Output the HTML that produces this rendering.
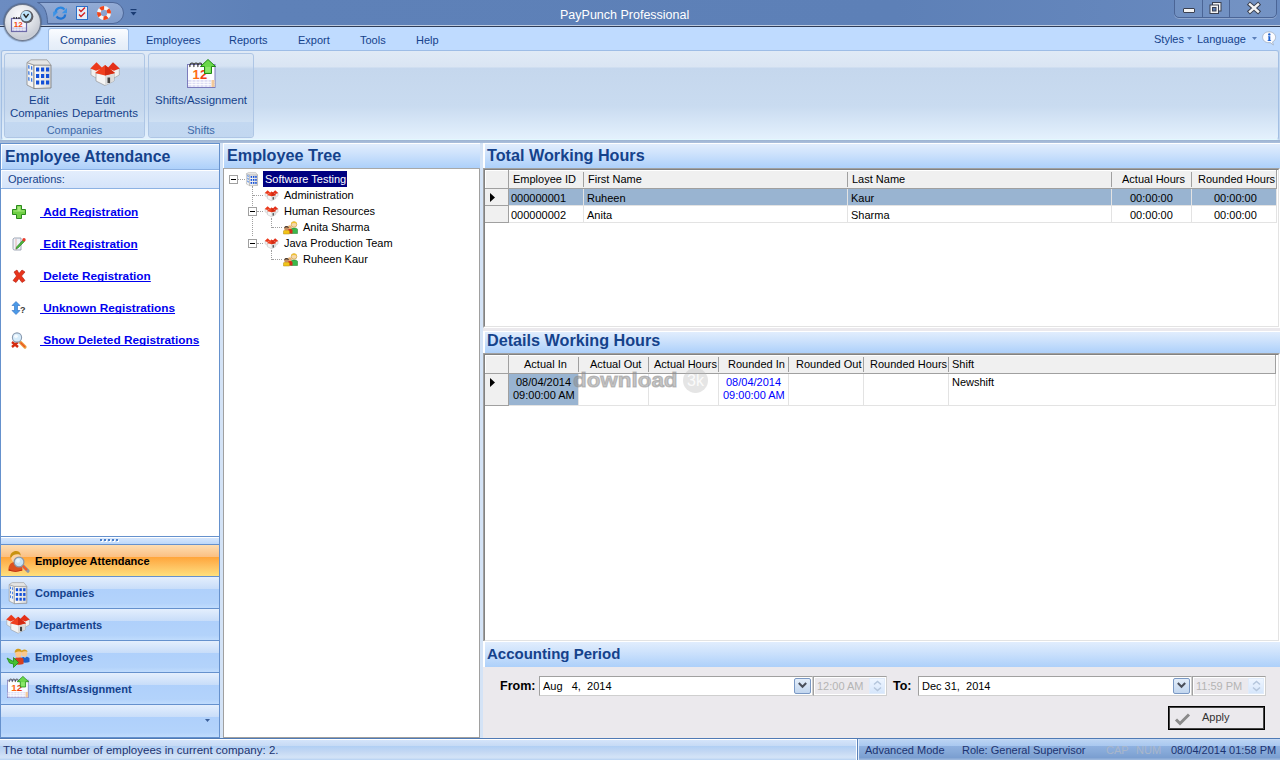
<!DOCTYPE html>
<html><head><meta charset="utf-8">
<style>
*{margin:0;padding:0;box-sizing:border-box}
html,body{width:1280px;height:760px;overflow:hidden;background:#c4d8f0;font-family:"Liberation Sans",sans-serif;font-size:11px;color:#000}
.a{position:absolute}
.t{white-space:nowrap}
svg{position:absolute;overflow:visible}
#title{left:0;top:0;width:1280px;height:25px;background:linear-gradient(90deg,#6c8cc1 0,#5e81b8 20%,#5d80b7 70%,#6a8bc0 100%)}
#tabs{left:0;top:25px;width:1280px;height:25px;background:linear-gradient(#c8e3ff 0,#c8e3ff 1px,#bfdbff 1px);border-top:1px solid #bccadf}
.tab{position:absolute;top:8px;color:#15428b;font-size:11px;line-height:13px}
#ribbon{left:1px;top:50px;width:1278px;height:90px;border:1px solid #a3bfe3;border-top-color:#9ebde6;border-bottom-color:#e2f8fe;border-radius:3px;background:linear-gradient(#e0eaf6 0,#dae5f3 16px,#c5d7ed 17px,#c9dbf0 55px,#e4f1fd 88px)}
.grp{top:2px;height:85px;border:1px solid #aec6e5;border-radius:3px;background:linear-gradient(#dde8f5 0,#d6e3f3 12px,#c3d5ec 15px,#c6d8ee 55px,#cfe0f3 68px)}
.grp .lab{position:absolute;left:0;right:0;bottom:0;height:15px;background:linear-gradient(#c3d8f1,#c2d7f0);color:#3e6aaa;text-align:center;line-height:13px;padding-top:2px;font-size:11px;border-radius:0 0 3px 3px}
.rbt{position:absolute;color:#15428b;text-align:center;line-height:13px;font-size:11.5px}
.hdr{position:absolute;left:0;top:0;height:25px;background:linear-gradient(#fff 0,#fff 1px,#e1edfd 1px,#cfe3fc 40%,#add0fa 100%);color:#15428b;font-weight:bold;font-size:16.2px;line-height:25px;padding-left:4px;white-space:nowrap;box-shadow:inset 1px 0 0 #fff}
#status{left:0;top:738px;width:1280px;height:22px;background:linear-gradient(#ffffff 0,#ffffff 1px,#d4e4fa 1px,#c6daf5 7px,#b0cff4 7px,#c4d8f3 13px,#d3e3f7 18px,#d0e1f6 19px,#b6d1f2 21px);border-top:1px solid #4f7ab5;color:#1c3370;font-size:11.5px;line-height:21px}
.lnk{position:absolute;color:#0000ee;font-weight:bold;text-decoration:underline;text-decoration-skip-ink:none;font-size:11.8px;line-height:14px}
.gh{position:absolute;top:0;height:19px;background:#f0f0f0;line-height:18px;color:#000;font-size:11px}
.gs{position:absolute;width:1px;background:#a0a0a0}
.cell{position:absolute;line-height:16px;font-size:11px;white-space:nowrap}
.nav{position:absolute;left:0;width:218px;height:32px;border-top:1px solid #6591cd;background:linear-gradient(#e4effd 0,#c8ddf9 38%,#afd0fb 39%,#b3d3fb 85%,#c0dcfd 100%);color:#15428b;font-weight:bold;font-size:11px;line-height:30px;padding-left:34px}
.tr{position:absolute;font-size:11px;line-height:14px;white-space:nowrap}
.dot{position:absolute;border-style:dotted;border-color:#a0a0a0;border-width:0}
</style></head><body>
<!-- Title bar -->
<div id="title" class="a">
  <svg style="left:0;top:0" width="140" height="26" viewBox="0 0 140 26">
    <defs><linearGradient id="qg" x1="0" y1="0" x2="0" y2="1"><stop offset="0" stop-color="#93acd6"/><stop offset="0.5" stop-color="#8aa4d0"/><stop offset="1" stop-color="#819dcc"/></linearGradient></defs>
    <path d="M37.5 2.5 H113 A10.5 10.5 0 0 1 113 23.5 H47.5 C47.5 12 44 5 37.5 2.5 Z" fill="url(#qg)" stroke="#4d6798" stroke-width="1"/>
  </svg>
  <!-- refresh icon -->
  <svg style="left:53px;top:6px" width="15" height="14" viewBox="0 0 15 14">
    <path d="M2.5 7 C2.5 2.5 8 -0.5 11.5 3.5" fill="none" stroke="#2a86e0" stroke-width="2.2"/>
    <path d="M14 2 L14 7.2 L8.8 7.2 Z" fill="#3d93e6"/>
    <path d="M12.2 8.5 C12 12.5 6.5 14.5 3.5 10.5" fill="none" stroke="#1f74d4" stroke-width="2.2"/>
    <path d="M0.2 5.8 L5.2 5.8 L0.2 11 Z" fill="#3d93e6"/>
  </svg>
  <!-- checklist icon -->
  <svg style="left:76px;top:6px" width="12" height="14" viewBox="0 0 12 14">
    <rect x="0.5" y="0.5" width="11" height="13" fill="#e8eef6" stroke="#2a6fc9"/>
    <path d="M3 3.5 L5 5.5 L9 1.5 M3 8.5 L5 10.5 L9 6.5" fill="none" stroke="#d42020" stroke-width="1.4"/>
  </svg>
  <!-- lifebuoy -->
  <svg style="left:97px;top:6px" width="14" height="14" viewBox="0 0 14 14">
    <circle cx="7" cy="7" r="5.1" fill="none" stroke="#f6f6f6" stroke-width="3.8"/>
    <circle cx="7" cy="7" r="5.1" fill="none" stroke="#f0441a" stroke-width="3.8" stroke-dasharray="4.005 4.005" transform="rotate(-135 7 7)"/>
  </svg>
  <!-- qat dropdown -->
  <svg style="left:130px;top:9px" width="7" height="7" viewBox="0 0 7 7">
    <rect x="0.5" y="0" width="6" height="1.2" fill="#1a3c74"/>
    <path d="M0.5 3 L6.5 3 L3.5 6.5 Z" fill="#1a3c74"/>
  </svg>
  <!-- title text -->
  <div class="a t" style="left:560px;top:8px;font-size:12.5px;line-height:15px;color:#fff">PayPunch Professional</div>
  <!-- window controls -->
  <div class="a" style="left:1174px;top:-3px;width:103px;height:21px;border:1px solid #4b6596;border-radius:0 0 5px 5px;box-shadow:0 1px 0 rgba(255,255,255,.25);background:rgba(255,255,255,.07)"></div>
  <div class="a" style="left:1202px;top:0;width:1px;height:17px;background:#4b6596"></div>
  <div class="a" style="left:1229px;top:0;width:1px;height:17px;background:#4b6596"></div>
  <div class="a" style="left:1183px;top:8px;width:12px;height:5px;background:#f4f4f4;border:1px solid #3a4050;border-radius:1px"></div>
  <svg style="left:1209px;top:2px" width="13" height="12" viewBox="0 0 13 12">
    <rect x="3.5" y="0.5" width="8.5" height="8.5" fill="#f0f0f0" stroke="#3a4050"/>
    <rect x="1" y="3" width="8.5" height="8.5" fill="#f4f4f4" stroke="#3a4050"/>
    <rect x="3.5" y="5.5" width="3.5" height="3.5" fill="#5b7db5" stroke="#3a4050"/>
  </svg>
  <svg style="left:1247px;top:2px" width="14" height="12" viewBox="0 0 14 12">
    <path d="M3 2.5 L11 9.5 M11 2.5 L3 9.5" stroke="#3a4050" stroke-width="4.4" stroke-linecap="square"/>
    <path d="M3 2.5 L11 9.5 M11 2.5 L3 9.5" stroke="#f4f4f4" stroke-width="2.4" stroke-linecap="square"/>
  </svg>
</div>
<!-- Tab strip -->
<div id="tabs" class="a">
  <div class="a" style="left:0;top:0;width:1280px;height:1px;background:#2e3c58"></div><div class="a" style="left:48px;top:2px;width:81px;height:23px;border:1px solid #9bbbe6;border-bottom:none;border-radius:3px 3px 0 0;background:linear-gradient(#fafcff,#eaf1fa 60%,#e3ecf7)"></div>
  <div class="tab t" style="left:60px">Companies</div>
  <div class="tab t" style="left:146px">Employees</div>
  <div class="tab t" style="left:229px">Reports</div>
  <div class="tab t" style="left:298px">Export</div>
  <div class="tab t" style="left:360px">Tools</div>
  <div class="tab t" style="left:416px">Help</div>
  <div class="tab t" style="left:1154px;top:7px">Styles</div>
  <svg style="left:1187px;top:11px" width="5" height="3" viewBox="0 0 5 3"><path d="M0 0 H5 L2.5 3 Z" fill="#5b7fb9"/></svg>
  <div class="tab t" style="left:1197px;top:7px">Language</div>
  <svg style="left:1252px;top:11px" width="5" height="3" viewBox="0 0 5 3"><path d="M0 0 H5 L2.5 3 Z" fill="#5b7fb9"/></svg>
  <svg style="left:1262px;top:5px" width="15" height="15" viewBox="0 0 15 15">
    <path d="M7 0.8 C10.8 0.8 13.6 3.2 13.6 6.3 C13.6 8.5 12.4 10 10.6 10.9 L11.4 14 L8.2 11.6 C7.8 11.7 7.4 11.7 7 11.7 C3.2 11.7 0.6 9.3 0.6 6.3 C0.6 3.2 3.2 0.8 7 0.8 Z" fill="#fbfcff" stroke="#a6b3c6" stroke-width="0.9"/>
    <circle cx="7.3" cy="3.4" r="1.2" fill="#1a5fd0"/>
    <path d="M6.1 5.2 H8.3 V9.3 H9.1 V10 H5.6 V9.3 H6.4 V6 H6.1 Z" fill="#1a5fd0"/>
  </svg>
</div>

<!-- App button -->
<div class="a" style="left:4px;top:4px;width:37px;height:37px;border-radius:50%;background:#6f7a8e;box-shadow:0 0 1px 1px rgba(60,70,90,.45)"></div>
<div class="a" style="left:5px;top:5px;width:35px;height:35px;border-radius:50%;background:radial-gradient(circle at 42% 28%,#f8f9fb 0,#e4e7ec 38%,#c8ccd5 72%,#d6dae1 88%,#f4f6f8 100%)"></div>
<svg style="left:10px;top:9px" width="26" height="24" viewBox="0 0 26 24">
  <rect x="1.5" y="9.5" width="15" height="13" fill="#f6f6fc" stroke="#6d6aa8" stroke-width="1.2"/>
  <rect x="2.2" y="18.5" width="13.6" height="3.4" fill="#b8b8e0"/>
  <path d="M2.2 20.2 H15.8 M5 18.5 V22 M8 18.5 V22 M11 18.5 V22 M14 18.5 V22" stroke="#ffffff" stroke-width="0.7"/>
  <path d="M4 10 v-2 M6.5 10 v-2 M9 10 v-2 M11.5 10 v-2" stroke="#333" stroke-width="1.2"/>
  <text x="3.8" y="17.8" font-family="Liberation Sans" font-weight="bold" font-size="8" fill="#f24a10">12</text>
  <circle cx="16.8" cy="7.6" r="6.6" fill="#5e5e66"/>
  <circle cx="16.2" cy="7" r="5.2" fill="#bfe4fb"/>
  <path d="M13.6 5 L16 8.4 L18.6 4.8" fill="none" stroke="#222" stroke-width="1.4"/>
</svg>


<div id="ribbon" class="a">
  <div class="a grp" style="left:2px;width:141px">
    <div class="rbt t" style="left:-2px;width:72px;top:40px">Edit<br>Companies</div>
    <div class="rbt t" style="left:64px;width:72px;top:40px">Edit<br>Departments</div>
    <div class="lab">Companies</div>
  </div>
  <div class="a grp" style="left:146px;width:106px">
    <div class="rbt t" style="left:0;width:104px;top:40px">Shifts/Assignment</div>
    <div class="lab">Shifts</div>
  </div>
</div>
<svg style="left:26px;top:59px" width="26" height="30" viewBox="0 0 26 30">
<defs><linearGradient id="bf2659" x1="0" x2="1"><stop offset="0" stop-color="#fdfdfd"/><stop offset="1" stop-color="#d8d8d8"/></linearGradient></defs>
<path d="M1 3.5 L8 6 L8 29.5 L1 26 Z" fill="#f2f2f2" stroke="#8a8a8a" stroke-width="0.8"/>
<path d="M8 6 H25 V29 L8 29.5 Z" fill="url(#bf2659)" stroke="#7a7a7a" stroke-width="0.8"/>
<path d="M1 3.5 L5 0.8 H21 L25 6 H8 Z" fill="#e4e4e4" stroke="#9a9a9a" stroke-width="0.8"/>
<g fill="#1450d8">
<rect x="10" y="8.5" width="3.2" height="4"/><rect x="15" y="8.5" width="3.2" height="4"/><rect x="20" y="8.5" width="3.2" height="4"/>
<rect x="10" y="15" width="3.2" height="4"/><rect x="15" y="15" width="3.2" height="4"/><rect x="20" y="15" width="3.2" height="4"/>
<rect x="10" y="21.5" width="3.2" height="4"/><rect x="15" y="21.5" width="3.2" height="4"/><rect x="20" y="21.5" width="3.2" height="4"/>
</g>
<g fill="#3a78e0">
<path d="M2.2 6 l1.3 .5 v3.5 l-1.3 -.5z M5 7 l1.3 .5 v3.5 l-1.3 -.5z"/>
<path d="M2.2 12 l1.3 .5 v3.5 l-1.3 -.5z M5 13 l1.3 .5 v3.5 l-1.3 -.5z"/>
<path d="M2.2 18 l1.3 .5 v3.5 l-1.3 -.5z M5 19 l1.3 .5 v3.5 l-1.3 -.5z"/>
</g></svg>
<svg style="left:90px;top:62px" width="30" height="24" viewBox="0 0 30 24">
<path d="M1 6.5 V13 L6 16 L11.5 13 V6.5 Z" fill="#f0f0f0" stroke="#999" stroke-width="0.6"/>
<path d="M0.3 6.5 L6.5 0.3 L12.5 6.2 L6 8.8 Z" fill="#ec3a1c"/>
<path d="M18.5 6.5 V13 L24 16 L29.3 13 V6.5 Z" fill="#f0f0f0" stroke="#999" stroke-width="0.6"/>
<path d="M17.5 6.2 L23 0.3 L29.7 6.5 L24 8.8 Z" fill="#e4301a"/>
<path d="M6 11 V19 L15 23.5 L24 19 V11 Z" fill="#f5f5f5" stroke="#8a8a8a" stroke-width="0.6"/>
<path d="M15 13.5 V23.5 L24 19 V11 Z" fill="#dcdcdc"/>
<path d="M5 11 L15 3 L25 11 L15 13.5 Z" fill="#f0401f"/>
<path d="M15 3 L25 11 L15 13.5 Z" fill="#d42a12"/>
<rect x="17.5" y="15.5" width="2.6" height="5.5" fill="#444"/>
</svg>
<svg style="left:187px;top:59px" width="29" height="29" viewBox="0 0 29 29">
<rect x="0.5" y="5.5" width="27.5" height="23" fill="#fdfdff" stroke="#7c7cbc" stroke-width="1"/>
<rect x="1" y="21" width="26.5" height="7" fill="#dcdcf4"/>
<path d="M1 23.3 H27.5 M1 25.6 H27.5 M5 21 V28 M9 21 V28 M13 21 V28 M17 21 V28 M21 21 V28 M24.5 21 V28" stroke="#ffffff" stroke-width="0.9"/>
<rect x="24.5" y="21" width="3" height="7" fill="#f2c89a"/>
<path d="M3 8 C2 4 6 2.5 7 6 M7 8 C6 4 10 2.5 11 6 M11 8 C10 4 14 2.5 15 6" fill="none" stroke="#333" stroke-width="1.1"/>
<text x="5.5" y="20" font-family="Liberation Sans" font-weight="bold" font-size="13" fill="#ff6a12">1</text>
<text x="13" y="20" font-family="Liberation Sans" font-weight="bold" font-size="13" fill="#f03c10">2</text>
<path d="M21 0.5 L28.5 7.5 H24.5 V14.5 H17.5 V7.5 H13.5 Z" fill="#6ad84a" stroke="#1f8a12" stroke-width="1"/>
<path d="M18.5 8 H23.5 V13.5 H18.5 Z" fill="#8ae86a"/>
</svg>
<div class="a" style="left:0;top:140px;width:1280px;height:3px;background:linear-gradient(#9db3d2,#abc0dc)"></div>
<div class="a" style="left:0;top:143px;width:220px;height:595px;background:#fff;border:1px solid #6591cd;border-bottom:none">
  <div class="hdr" style="width:218px;font-size:15.9px">Employee Attendance</div>
  <div class="a" style="left:0;top:25px;width:218px;height:1px;background:#8db2e3"></div>
  <div class="a t" style="left:0;top:26px;width:218px;height:19px;background:linear-gradient(#e4eefc,#d5e4fa);border-bottom:1px solid #8db2e3;padding-left:7px;line-height:18px;color:#15428b;font-size:11px;box-shadow:inset 1px 1px 0 #fff">Operations:</div>
</div>
<div class="lnk t" style="left:40px;top:205px">&nbsp;Add Registration</div>
<div class="lnk t" style="left:40px;top:237px">&nbsp;Edit Registration</div>
<div class="lnk t" style="left:40px;top:269px">&nbsp;Delete Registration</div>
<div class="lnk t" style="left:40px;top:301px">&nbsp;Unknown Registrations</div>
<div class="lnk t" style="left:40px;top:333px">&nbsp;Show Deleted Registrations</div>
<svg style="left:12px;top:205px" width="14" height="14" viewBox="0 0 14 14">
<path d="M4.5 0.5 H9.5 V4.5 H13.5 V9.5 H9.5 V13.5 H4.5 V9.5 H0.5 V4.5 H4.5 Z" fill="#6fcf45" stroke="#2b8a1c" stroke-width="1"/>
<path d="M5.5 1.5 H8.5 V5.5 H12.5 V6.5 H1.5 V5.5 H5.5 Z" fill="#a6e87c"/></svg>
<svg style="left:12px;top:237px" width="14" height="14" viewBox="0 0 14 14">
<path d="M1 2 Q2 0.5 4 1 H9 V13 H2.5 Q1 13 1 11.5 Z" fill="#eef2f8" stroke="#8a94a4" stroke-width="0.8"/>
<path d="M4 2 V13" stroke="#e08a80" stroke-width="0.6"/>
<path d="M4.5 10 L11 3 L12.5 4.5 L6 11 L4 12 Z" fill="#4cb83a" stroke="#2a7a20" stroke-width="0.6"/>
<circle cx="12" cy="2.8" r="1.7" fill="#e83a2a"/></svg>
<svg style="left:12px;top:269px" width="14" height="14" viewBox="0 0 14 14">
<path d="M2 3 L5 1 L7 4.5 L10 1 L13 3 L9.5 7 L13 11.5 L10 13.5 L7 9.5 L4 13.5 L1 11.5 L4.5 7 Z" fill="#e8341c" stroke="#b01a0a" stroke-width="0.6"/></svg>
<svg style="left:11px;top:301px" width="16" height="14" viewBox="0 0 16 14">
<path d="M5 0.5 L9 4.5 H6.5 V9.5 H9 L5 13.5 L1 9.5 H3.5 V4.5 H1 Z" fill="#4a9ae8" stroke="#2a6ac0" stroke-width="0.6"/>
<text x="9" y="11.5" font-family="Liberation Sans" font-weight="bold" font-size="9" fill="#3a3a3a">?</text></svg>
<svg style="left:11px;top:332px" width="16" height="16" viewBox="0 0 16 16">
<path d="M1 10 L7 15 M7 10 L1 15" stroke="#d42a10" stroke-width="2.4"/>
<path d="M9.5 10.5 L14 15" stroke="#e8a040" stroke-width="3.2" stroke-linecap="round"/>
<path d="M9.5 10.5 L14 15" stroke="#f05020" stroke-width="1.2"/>
<circle cx="6" cy="5.5" r="4.6" fill="#d6ecfb" stroke="#8a9ab0" stroke-width="1.1"/>
<circle cx="5" cy="4.3" r="1.8" fill="#ffffff" opacity=".8"/></svg>
<div class="a" style="left:1px;top:536px;width:218px;height:9px;border-top:1px solid #6591cd;border-bottom:1px solid #6591cd;background:linear-gradient(#fff 0,#fff 1px,#d6e6fc 1px,#bcd8fa 100%)"></div>
<div class="a" style="left:101px;top:540px;width:2px;height:2px;background:#fff"></div>
<div class="a" style="left:100px;top:539px;width:2px;height:2px;background:#4a7ec8"></div>
<div class="a" style="left:105px;top:540px;width:2px;height:2px;background:#fff"></div>
<div class="a" style="left:104px;top:539px;width:2px;height:2px;background:#4a7ec8"></div>
<div class="a" style="left:109px;top:540px;width:2px;height:2px;background:#fff"></div>
<div class="a" style="left:108px;top:539px;width:2px;height:2px;background:#4a7ec8"></div>
<div class="a" style="left:113px;top:540px;width:2px;height:2px;background:#fff"></div>
<div class="a" style="left:112px;top:539px;width:2px;height:2px;background:#4a7ec8"></div>
<div class="a" style="left:117px;top:540px;width:2px;height:2px;background:#fff"></div>
<div class="a" style="left:116px;top:539px;width:2px;height:2px;background:#4a7ec8"></div>
<div class="a" style="left:1px;top:545px;width:218px;height:31px;border-top:none;background:linear-gradient(#fdddb2 0,#fbc083 38%,#ffa63c 40%,#fec261 70%,#ffe07c 100%)"></div>
<div class="a t" style="left:35px;top:555px;font-weight:bold;font-size:11px;line-height:13px;color:#000">Employee Attendance</div>
<div class="nav" style="left:1px;top:576px;height:32px"></div>
<div class="a t" style="left:35px;top:587px;font-weight:bold;font-size:11px;line-height:13px;color:#15428b">Companies</div>
<div class="nav" style="left:1px;top:608px;height:32px"></div>
<div class="a t" style="left:35px;top:619px;font-weight:bold;font-size:11px;line-height:13px;color:#15428b">Departments</div>
<div class="nav" style="left:1px;top:640px;height:32px"></div>
<div class="a t" style="left:35px;top:651px;font-weight:bold;font-size:11px;line-height:13px;color:#15428b">Employees</div>
<div class="nav" style="left:1px;top:672px;height:32px"></div>
<div class="a t" style="left:35px;top:683px;font-weight:bold;font-size:11px;line-height:13px;color:#15428b">Shifts/Assignment</div>
<div class="nav" style="left:1px;top:704px;height:33px"></div>
<svg style="left:205px;top:719px" width="5" height="3" viewBox="0 0 5 3"><path d="M0 0 H5 L2.5 3 Z" fill="#3a5f9a"/></svg>
<div class="a" style="left:1px;top:737px;width:218px;height:1px;background:#6591cd"></div>
<svg style="left:4px;top:545px" width="30" height="30" viewBox="0 0 30 30">
<path d="M4.5 25.5 C4 19 8 17 11 17 C15 17 18.5 19 18.5 25.5 C14 27 9 27 4.5 25.5 Z" fill="#dc5220"/>
<path d="M5 24 C8 26.5 14 26.5 18 24.5 V25.5 C14 27 9 27 4.5 25.5 Z" fill="#b82a10"/>
<ellipse cx="11.5" cy="12" rx="4.5" ry="5.8" fill="#fcd2a4"/>
<path d="M6.2 12.5 C5.5 5 16.5 3.5 16.8 10.5 C15 8.5 9 8.5 7.5 12.5 Z" fill="#c89212"/>
<path d="M18.5 20.5 L24 26" stroke="#8a95a8" stroke-width="3.2" stroke-linecap="round"/>
<path d="M18.5 20.5 L23 25" stroke="#ff5a1a" stroke-width="2.2"/>
<circle cx="15" cy="17" r="4.9" fill="#c4e2f6" stroke="#8c96a4" stroke-width="1.2"/>
<circle cx="14" cy="15.8" r="2" fill="#eef8ff" opacity=".8"/>
</svg>
<svg style="left:8px;top:582px" width="20" height="22" viewBox="0 0 26 30">
<defs><linearGradient id="bf8582" x1="0" x2="1"><stop offset="0" stop-color="#fdfdfd"/><stop offset="1" stop-color="#d8d8d8"/></linearGradient></defs>
<path d="M1 3.5 L8 6 L8 29.5 L1 26 Z" fill="#f2f2f2" stroke="#8a8a8a" stroke-width="0.8"/>
<path d="M8 6 H25 V29 L8 29.5 Z" fill="url(#bf8582)" stroke="#7a7a7a" stroke-width="0.8"/>
<path d="M1 3.5 L5 0.8 H21 L25 6 H8 Z" fill="#e4e4e4" stroke="#9a9a9a" stroke-width="0.8"/>
<g fill="#1450d8">
<rect x="10" y="8.5" width="3.2" height="4"/><rect x="15" y="8.5" width="3.2" height="4"/><rect x="20" y="8.5" width="3.2" height="4"/>
<rect x="10" y="15" width="3.2" height="4"/><rect x="15" y="15" width="3.2" height="4"/><rect x="20" y="15" width="3.2" height="4"/>
<rect x="10" y="21.5" width="3.2" height="4"/><rect x="15" y="21.5" width="3.2" height="4"/><rect x="20" y="21.5" width="3.2" height="4"/>
</g>
<g fill="#3a78e0">
<path d="M2.2 6 l1.3 .5 v3.5 l-1.3 -.5z M5 7 l1.3 .5 v3.5 l-1.3 -.5z"/>
<path d="M2.2 12 l1.3 .5 v3.5 l-1.3 -.5z M5 13 l1.3 .5 v3.5 l-1.3 -.5z"/>
<path d="M2.2 18 l1.3 .5 v3.5 l-1.3 -.5z M5 19 l1.3 .5 v3.5 l-1.3 -.5z"/>
</g></svg>
<svg style="left:6px;top:614px" width="24" height="20" viewBox="0 0 30 24">
<path d="M1 6.5 V13 L6 16 L11.5 13 V6.5 Z" fill="#f0f0f0" stroke="#999" stroke-width="0.6"/>
<path d="M0.3 6.5 L6.5 0.3 L12.5 6.2 L6 8.8 Z" fill="#ec3a1c"/>
<path d="M18.5 6.5 V13 L24 16 L29.3 13 V6.5 Z" fill="#f0f0f0" stroke="#999" stroke-width="0.6"/>
<path d="M17.5 6.2 L23 0.3 L29.7 6.5 L24 8.8 Z" fill="#e4301a"/>
<path d="M6 11 V19 L15 23.5 L24 19 V11 Z" fill="#f5f5f5" stroke="#8a8a8a" stroke-width="0.6"/>
<path d="M15 13.5 V23.5 L24 19 V11 Z" fill="#dcdcdc"/>
<path d="M5 11 L15 3 L25 11 L15 13.5 Z" fill="#f0401f"/>
<path d="M15 3 L25 11 L15 13.5 Z" fill="#d42a12"/>
<rect x="17.5" y="15.5" width="2.6" height="5.5" fill="#444"/>
</svg>
<svg style="left:4px;top:640px" width="30" height="30" viewBox="0 0 30 30">
<path d="M17 22 V19 C17 16.5 25 16 25.5 18.5 L25.5 22 C23 23 19.5 23 17 22 Z" fill="#1f5fc8"/>
<path d="M19.5 16.5 L21 18 L22.5 16.5 Z" fill="#bfe8f8"/>
<ellipse cx="20.5" cy="13.5" rx="2.8" ry="3.3" fill="#f8c890"/>
<path d="M17.5 12.5 C17 8.5 23.5 8.5 23.5 12 C22 11 19.5 11 17.5 12.5 Z" fill="#d8a020"/>
<path d="M10.5 24 V19.5 C10.5 16.5 19.5 16.5 19.5 19.5 V24 C16 25 13.5 25 10.5 24 Z" fill="#d8401c"/>
<ellipse cx="14.5" cy="13.8" rx="3.2" ry="3.8" fill="#fbc88e"/>
<path d="M10.8 13 C10 7.5 18.5 7.5 18 12.5 C16.5 11 13 11 10.8 13 Z" fill="#d49a18"/>
<path d="M3 18 L9.5 21.5 V17.5 L14.5 22.5 L9.5 27.5 V24 L5.5 23 Z" fill="#46c032" stroke="#1e8a18" stroke-width="0.8"/>
</svg>
<svg style="left:7px;top:676px" width="22" height="22" viewBox="0 0 29 29">
<rect x="0.5" y="5.5" width="27.5" height="23" fill="#fdfdff" stroke="#7c7cbc" stroke-width="1"/>
<rect x="1" y="21" width="26.5" height="7" fill="#dcdcf4"/>
<path d="M1 23.3 H27.5 M1 25.6 H27.5 M5 21 V28 M9 21 V28 M13 21 V28 M17 21 V28 M21 21 V28 M24.5 21 V28" stroke="#ffffff" stroke-width="0.9"/>
<rect x="24.5" y="21" width="3" height="7" fill="#f2c89a"/>
<path d="M3 8 C2 4 6 2.5 7 6 M7 8 C6 4 10 2.5 11 6 M11 8 C10 4 14 2.5 15 6" fill="none" stroke="#333" stroke-width="1.1"/>
<text x="5.5" y="20" font-family="Liberation Sans" font-weight="bold" font-size="13" fill="#ff6a12">1</text>
<text x="13" y="20" font-family="Liberation Sans" font-weight="bold" font-size="13" fill="#f03c10">2</text>
<path d="M21 0.5 L28.5 7.5 H24.5 V14.5 H17.5 V7.5 H13.5 Z" fill="#6ad84a" stroke="#1f8a12" stroke-width="1"/>
<path d="M18.5 8 H23.5 V13.5 H18.5 Z" fill="#8ae86a"/>
</svg>
<div class="a" style="left:220px;top:143px;width:3px;height:595px;background:#d4e3f6"></div>
<div class="a" style="left:223px;top:143px;width:257px;height:595px;background:#fff">
  <div class="hdr" style="width:257px;border-bottom:1px solid #a8a8a8;height:26px">Employee Tree</div>
  <div class="a" style="left:0;top:26px;width:1px;height:569px;background:#a0a0a0"></div>
  <div class="a" style="left:256px;top:26px;width:1px;height:569px;background:#a0a0a0"></div>
  <div class="a" style="left:0;top:594px;width:257px;height:1px;background:#a0a0a0"></div>
</div>
<div class="a" style="left:480px;top:143px;width:3px;height:595px;background:#d4e3f6"></div>
<div class="dot" style="left:252px;top:186px;height:50px;border-left-width:1px"></div>
<div class="dot" style="left:271px;top:218px;height:10px;border-left-width:1px"></div>
<div class="dot" style="left:271px;top:250px;height:10px;border-left-width:1px"></div>
<div class="dot" style="left:238px;top:179px;width:7px;border-top-width:1px"></div>
<div class="dot" style="left:253px;top:195px;width:10px;border-top-width:1px"></div>
<div class="dot" style="left:257px;top:211px;width:6px;border-top-width:1px"></div>
<div class="dot" style="left:257px;top:243px;width:6px;border-top-width:1px"></div>
<div class="dot" style="left:272px;top:227px;width:10px;border-top-width:1px"></div>
<div class="dot" style="left:272px;top:259px;width:10px;border-top-width:1px"></div>
<div class="a" style="left:229px;top:175px;width:9px;height:9px;border:1px solid #a0a0a0;background:#fff"><div class="a" style="left:1px;top:3px;width:5px;height:1px;background:#000"></div></div>
<div class="a" style="left:248px;top:207px;width:9px;height:9px;border:1px solid #a0a0a0;background:#fff"><div class="a" style="left:1px;top:3px;width:5px;height:1px;background:#000"></div></div>
<div class="a" style="left:248px;top:239px;width:9px;height:9px;border:1px solid #a0a0a0;background:#fff"><div class="a" style="left:1px;top:3px;width:5px;height:1px;background:#000"></div></div>
<svg style="left:246px;top:172px" width="12" height="14" viewBox="0 0 26 30">
<defs><linearGradient id="bf246172" x1="0" x2="1"><stop offset="0" stop-color="#fdfdfd"/><stop offset="1" stop-color="#d8d8d8"/></linearGradient></defs>
<path d="M1 3.5 L8 6 L8 29.5 L1 26 Z" fill="#f2f2f2" stroke="#8a8a8a" stroke-width="0.8"/>
<path d="M8 6 H25 V29 L8 29.5 Z" fill="url(#bf246172)" stroke="#7a7a7a" stroke-width="0.8"/>
<path d="M1 3.5 L5 0.8 H21 L25 6 H8 Z" fill="#e4e4e4" stroke="#9a9a9a" stroke-width="0.8"/>
<g fill="#1450d8">
<rect x="10" y="8.5" width="3.2" height="4"/><rect x="15" y="8.5" width="3.2" height="4"/><rect x="20" y="8.5" width="3.2" height="4"/>
<rect x="10" y="15" width="3.2" height="4"/><rect x="15" y="15" width="3.2" height="4"/><rect x="20" y="15" width="3.2" height="4"/>
<rect x="10" y="21.5" width="3.2" height="4"/><rect x="15" y="21.5" width="3.2" height="4"/><rect x="20" y="21.5" width="3.2" height="4"/>
</g>
<g fill="#3a78e0">
<path d="M2.2 6 l1.3 .5 v3.5 l-1.3 -.5z M5 7 l1.3 .5 v3.5 l-1.3 -.5z"/>
<path d="M2.2 12 l1.3 .5 v3.5 l-1.3 -.5z M5 13 l1.3 .5 v3.5 l-1.3 -.5z"/>
<path d="M2.2 18 l1.3 .5 v3.5 l-1.3 -.5z M5 19 l1.3 .5 v3.5 l-1.3 -.5z"/>
</g></svg>
<div class="a" style="left:263px;top:171px;width:84px;height:16px;background:#000080"></div>
<div class="tr" style="left:265px;top:172px;color:#fff">Software Testing</div>
<svg style="left:264px;top:190px" width="15" height="11" viewBox="0 0 30 24">
<path d="M1 6.5 V13 L6 16 L11.5 13 V6.5 Z" fill="#f0f0f0" stroke="#999" stroke-width="0.6"/>
<path d="M0.3 6.5 L6.5 0.3 L12.5 6.2 L6 8.8 Z" fill="#ec3a1c"/>
<path d="M18.5 6.5 V13 L24 16 L29.3 13 V6.5 Z" fill="#f0f0f0" stroke="#999" stroke-width="0.6"/>
<path d="M17.5 6.2 L23 0.3 L29.7 6.5 L24 8.8 Z" fill="#e4301a"/>
<path d="M6 11 V19 L15 23.5 L24 19 V11 Z" fill="#f5f5f5" stroke="#8a8a8a" stroke-width="0.6"/>
<path d="M15 13.5 V23.5 L24 19 V11 Z" fill="#dcdcdc"/>
<path d="M5 11 L15 3 L25 11 L15 13.5 Z" fill="#f0401f"/>
<path d="M15 3 L25 11 L15 13.5 Z" fill="#d42a12"/>
<rect x="17.5" y="15.5" width="2.6" height="5.5" fill="#444"/>
</svg>
<div class="tr" style="left:284px;top:188px">Administration</div>
<svg style="left:264px;top:206px" width="15" height="11" viewBox="0 0 30 24">
<path d="M1 6.5 V13 L6 16 L11.5 13 V6.5 Z" fill="#f0f0f0" stroke="#999" stroke-width="0.6"/>
<path d="M0.3 6.5 L6.5 0.3 L12.5 6.2 L6 8.8 Z" fill="#ec3a1c"/>
<path d="M18.5 6.5 V13 L24 16 L29.3 13 V6.5 Z" fill="#f0f0f0" stroke="#999" stroke-width="0.6"/>
<path d="M17.5 6.2 L23 0.3 L29.7 6.5 L24 8.8 Z" fill="#e4301a"/>
<path d="M6 11 V19 L15 23.5 L24 19 V11 Z" fill="#f5f5f5" stroke="#8a8a8a" stroke-width="0.6"/>
<path d="M15 13.5 V23.5 L24 19 V11 Z" fill="#dcdcdc"/>
<path d="M5 11 L15 3 L25 11 L15 13.5 Z" fill="#f0401f"/>
<path d="M15 3 L25 11 L15 13.5 Z" fill="#d42a12"/>
<rect x="17.5" y="15.5" width="2.6" height="5.5" fill="#444"/>
</svg>
<div class="tr" style="left:284px;top:204px">Human Resources</div>
<svg style="left:264px;top:238px" width="15" height="11" viewBox="0 0 30 24">
<path d="M1 6.5 V13 L6 16 L11.5 13 V6.5 Z" fill="#f0f0f0" stroke="#999" stroke-width="0.6"/>
<path d="M0.3 6.5 L6.5 0.3 L12.5 6.2 L6 8.8 Z" fill="#ec3a1c"/>
<path d="M18.5 6.5 V13 L24 16 L29.3 13 V6.5 Z" fill="#f0f0f0" stroke="#999" stroke-width="0.6"/>
<path d="M17.5 6.2 L23 0.3 L29.7 6.5 L24 8.8 Z" fill="#e4301a"/>
<path d="M6 11 V19 L15 23.5 L24 19 V11 Z" fill="#f5f5f5" stroke="#8a8a8a" stroke-width="0.6"/>
<path d="M15 13.5 V23.5 L24 19 V11 Z" fill="#dcdcdc"/>
<path d="M5 11 L15 3 L25 11 L15 13.5 Z" fill="#f0401f"/>
<path d="M15 3 L25 11 L15 13.5 Z" fill="#d42a12"/>
<rect x="17.5" y="15.5" width="2.6" height="5.5" fill="#444"/>
</svg>
<div class="tr" style="left:284px;top:236px">Java Production Team</div>
<svg style="left:283px;top:220px" width="15" height="14" viewBox="0 0 15 14">
<path d="M7.5 13.5 V9.5 C7.5 7.5 14.5 7.5 14.5 9.5 V13.5 Z" fill="#3cb84a" stroke="#1e7a2a" stroke-width="0.5"/>
<circle cx="11" cy="4.5" r="2.8" fill="#f6d8a8" stroke="#c09020" stroke-width="0.6"/>
<path d="M8.2 4 C8.2 0.8 13.8 0.8 13.8 4 C12.5 2.8 9.5 2.8 8.2 4 Z" fill="#f0c030"/>
<path d="M4 13.5 V10 C4 8.5 9.5 8.5 9.5 10 V13.5 Z" fill="#d8281a"/>
<circle cx="6.8" cy="7.2" r="2" fill="#e8b070"/>
<path d="M0.5 14 V11 C0.5 9.5 6.5 9.5 6.5 11 V14 Z" fill="#f2c418" stroke="#b08a10" stroke-width="0.5"/>
<circle cx="3.5" cy="8.2" r="2.3" fill="#c89060"/>
<path d="M1.2 8 C1.2 5.5 5.8 5.5 5.8 8 C4.5 7 2.5 7 1.2 8 Z" fill="#222"/>
</svg>
<div class="tr" style="left:303px;top:220px">Anita Sharma</div>
<svg style="left:283px;top:252px" width="15" height="14" viewBox="0 0 15 14">
<path d="M7.5 13.5 V9.5 C7.5 7.5 14.5 7.5 14.5 9.5 V13.5 Z" fill="#3cb84a" stroke="#1e7a2a" stroke-width="0.5"/>
<circle cx="11" cy="4.5" r="2.8" fill="#f6d8a8" stroke="#c09020" stroke-width="0.6"/>
<path d="M8.2 4 C8.2 0.8 13.8 0.8 13.8 4 C12.5 2.8 9.5 2.8 8.2 4 Z" fill="#f0c030"/>
<path d="M4 13.5 V10 C4 8.5 9.5 8.5 9.5 10 V13.5 Z" fill="#d8281a"/>
<circle cx="6.8" cy="7.2" r="2" fill="#e8b070"/>
<path d="M0.5 14 V11 C0.5 9.5 6.5 9.5 6.5 11 V14 Z" fill="#f2c418" stroke="#b08a10" stroke-width="0.5"/>
<circle cx="3.5" cy="8.2" r="2.3" fill="#c89060"/>
<path d="M1.2 8 C1.2 5.5 5.8 5.5 5.8 8 C4.5 7 2.5 7 1.2 8 Z" fill="#222"/>
</svg>
<div class="tr" style="left:303px;top:252px">Ruheen Kaur</div>
<div class="a" style="left:483px;top:143px;width:797px;height:595px;background:#ebe9ed"></div>
<div class="hdr a" style="left:483px;top:143px;width:797px;height:25px;border-left:1px solid #fff;padding-left:3px">Total Working Hours</div>
<div class="a" style="left:483px;top:168px;width:797px;height:160px;border:1px solid;border-color:#a0a0a0 #ffffff #ffffff #a0a0a0"></div><div class="a" style="left:484px;top:169px;width:795px;height:158px;background:#fff;border:1px solid;border-color:#828282 #e3e3e3 #e3e3e3 #828282"></div>
<div class="a" style="left:485px;top:170px;width:792px;height:19px;background:#f0f0f0;border-bottom:1px solid #a0a0a0;border-right:1px solid #a0a0a0;box-shadow:inset 1px 1px 0 #fff"></div>
<div class="gs" style="left:508px;top:170px;height:18px"></div>
<div class="gs" style="left:583px;top:172px;height:15px"></div>
<div class="gs" style="left:847px;top:172px;height:15px"></div>
<div class="gs" style="left:1111px;top:172px;height:15px"></div>
<div class="gs" style="left:1191px;top:172px;height:15px"></div>
<div class="a" style="left:485px;top:189px;width:24px;height:34px;background:#f0f0f0;border-right:1px solid #a0a0a0;border-bottom:1px solid #a0a0a0"></div>
<div class="a" style="left:485px;top:205px;width:23px;height:1px;background:#a0a0a0"></div>
<div class="a" style="left:509px;top:189px;width:768px;height:16px;background:#99b4d1"></div>
<div class="a" style="left:583px;top:189px;width:1px;height:34px;background:#e3e3e3"></div>
<div class="a" style="left:847px;top:189px;width:1px;height:34px;background:#e3e3e3"></div>
<div class="a" style="left:1111px;top:189px;width:1px;height:34px;background:#e3e3e3"></div>
<div class="a" style="left:1191px;top:189px;width:1px;height:34px;background:#e3e3e3"></div>
<div class="a" style="left:1276px;top:189px;width:1px;height:34px;background:#e3e3e3"></div>
<div class="a" style="left:509px;top:205px;width:768px;height:1px;background:#e3e3e3"></div>
<div class="a" style="left:509px;top:222px;width:768px;height:1px;background:#e3e3e3"></div>
<svg style="left:490px;top:193px" width="5" height="9" viewBox="0 0 5 9"><path d="M0 0 L5 4.5 L0 9 Z" fill="#000"/></svg>
<div class="cell" style="left:513px;top:171px">Employee ID</div>
<div class="cell" style="left:588px;top:171px">First Name</div>
<div class="cell" style="left:852px;top:171px">Last Name</div>
<div class="cell" style="left:1122px;top:171px">Actual Hours</div>
<div class="cell" style="left:1198px;top:171px">Rounded Hours</div>
<div class="cell" style="left:511px;top:190px">000000001</div>
<div class="cell" style="left:587px;top:190px">Ruheen</div>
<div class="cell" style="left:851px;top:190px">Kaur</div>
<div class="cell" style="left:1130px;top:190px">00:00:00</div>
<div class="cell" style="left:1214px;top:190px">00:00:00</div>
<div class="cell" style="left:511px;top:207px">000000002</div>
<div class="cell" style="left:587px;top:207px">Anita</div>
<div class="cell" style="left:851px;top:207px">Sharma</div>
<div class="cell" style="left:1130px;top:207px">00:00:00</div>
<div class="cell" style="left:1214px;top:207px">00:00:00</div>
<div class="hdr a" style="left:483px;top:331px;width:797px;height:22px;border-left:1px solid #fff;line-height:22px"><div class="a" style="left:3px;top:-2px">Details Working Hours</div></div>
<div class="a" style="left:483px;top:353px;width:797px;height:289px;border:1px solid;border-color:#a0a0a0 #ffffff #ffffff #a0a0a0"></div><div class="a" style="left:484px;top:354px;width:795px;height:287px;background:#fff;border:1px solid;border-color:#828282 #e3e3e3 #e3e3e3 #828282"></div>
<div class="a" style="left:485px;top:355px;width:791px;height:19px;background:#f0f0f0;border-bottom:1px solid #a0a0a0;border-right:1px solid #a0a0a0;box-shadow:inset 1px 1px 0 #fff"></div>
<div class="gs" style="left:508px;top:354px;height:19px"></div>
<div class="gs" style="left:578px;top:357px;height:15px"></div>
<div class="gs" style="left:648px;top:357px;height:15px"></div>
<div class="gs" style="left:718px;top:357px;height:15px"></div>
<div class="gs" style="left:788px;top:357px;height:15px"></div>
<div class="gs" style="left:863px;top:357px;height:15px"></div>
<div class="gs" style="left:948px;top:357px;height:15px"></div>
<div class="a" style="left:485px;top:374px;width:24px;height:32px;background:#f0f0f0;border-right:1px solid #a0a0a0;border-bottom:1px solid #a0a0a0"></div>
<div class="a" style="left:509px;top:374px;width:70px;height:31px;background:#99b4d1"></div>
<div class="a" style="left:578px;top:374px;width:1px;height:32px;background:#e3e3e3"></div>
<div class="a" style="left:648px;top:374px;width:1px;height:32px;background:#e3e3e3"></div>
<div class="a" style="left:718px;top:374px;width:1px;height:32px;background:#e3e3e3"></div>
<div class="a" style="left:788px;top:374px;width:1px;height:32px;background:#e3e3e3"></div>
<div class="a" style="left:863px;top:374px;width:1px;height:32px;background:#e3e3e3"></div>
<div class="a" style="left:948px;top:374px;width:1px;height:32px;background:#e3e3e3"></div>
<div class="a" style="left:1275px;top:374px;width:1px;height:32px;background:#e3e3e3"></div>
<div class="a" style="left:509px;top:405px;width:767px;height:1px;background:#e3e3e3"></div>
<svg style="left:490px;top:378px" width="5" height="9" viewBox="0 0 5 9"><path d="M0 0 L5 4.5 L0 9 Z" fill="#000"/></svg>
<div class="cell" style="left:524px;top:356px">Actual In</div>
<div class="cell" style="left:590px;top:356px">Actual Out</div>
<div class="cell" style="left:654px;top:356px">Actual Hours</div>
<div class="cell" style="left:728px;top:356px">Rounded In</div>
<div class="cell" style="left:796px;top:356px">Rounded Out</div>
<div class="cell" style="left:870px;top:356px">Rounded Hours</div>
<div class="cell" style="left:952px;top:356px">Shift</div>
<div class="cell" style="left:516px;top:376px;line-height:13px;text-align:center;width:53px">08/04/2014</div>
<div class="cell" style="left:513px;top:389px;line-height:13px">09:00:00 AM</div>
<div class="cell" style="left:726px;top:376px;line-height:13px;color:#0000ff">08/04/2014</div>
<div class="cell" style="left:723px;top:389px;line-height:13px;color:#0000ff">09:00:00 AM</div>
<div class="cell" style="left:952px;top:376px;line-height:13px">Newshift</div>
<div class="a t" style="left:573px;top:368px;font-size:20px;font-weight:bold;color:rgba(140,140,140,.5);letter-spacing:0px;line-height:24px;-webkit-text-stroke:1px rgba(140,140,140,.5);transform:scaleX(1.12);transform-origin:0 0">download</div>
<div class="a" style="left:683px;top:368px;width:25px;height:25px;border-radius:50%;background:rgba(180,180,180,.35)"></div>
<div class="a t" style="left:687px;top:371px;font-size:16px;color:rgba(255,255,255,.85);line-height:20px">3k</div>
<div class="hdr a" style="left:483px;top:641px;width:797px;height:26px;font-size:15px;border-left:1px solid #fff;line-height:26px;padding-left:3px">Accounting Period</div>
<div class="a t" style="left:500px;top:679px;font-weight:bold;font-size:12.5px;line-height:15px">From:</div>
<div class="a t" style="left:893px;top:679px;font-weight:bold;font-size:12.5px;line-height:15px">To:</div>
<div class="a" style="left:539px;top:676px;width:274px;height:20px;background:#fff;border:1px solid #a0a0a0;border-right-color:#cfcfcf;border-bottom-color:#cfcfcf"></div><div class="cell" style="left:543px;top:678px">Aug &nbsp; 4, &nbsp;2014</div><div class="a" style="left:794px;top:678px;width:17px;height:16px;border:1px solid #7a98c4;border-radius:2px;background:linear-gradient(#e3edf9,#c2d6ef)"></div><svg style="left:798px;top:682px" width="9" height="7" viewBox="0 0 9 7"><path d="M0.8 1 L4.5 4.8 L8.2 1" fill="none" stroke="#4a4f5a" stroke-width="2"/></svg><div class="a" style="left:813px;top:676px;width:74px;height:20px;background:#ececec;border:1px solid #a0a0a0;border-right-color:#cfcfcf;border-bottom-color:#cfcfcf"></div><div class="a" style="left:814px;top:677px;width:72px;height:18px;border:1px solid #fff;background:#ebe9ed"></div><div class="cell" style="left:817px;top:678px;color:#b4b4b4">12:00 AM</div><div class="a" style="left:869px;top:678px;width:16px;height:16px;background:linear-gradient(#eef5ff,#d6e6fb);border:1px solid #e0ebfa"></div><svg style="left:873px;top:680px" width="9" height="12" viewBox="0 0 9 12"><path d="M1 4.5 L4.5 1.5 L8 4.5 M1 7.5 L4.5 10.5 L8 7.5" fill="none" stroke="#b5c6dc" stroke-width="1.5"/></svg>
<div class="a" style="left:918px;top:676px;width:274px;height:20px;background:#fff;border:1px solid #a0a0a0;border-right-color:#cfcfcf;border-bottom-color:#cfcfcf"></div><div class="cell" style="left:922px;top:678px">Dec 31, &nbsp;2014</div><div class="a" style="left:1173px;top:678px;width:17px;height:16px;border:1px solid #7a98c4;border-radius:2px;background:linear-gradient(#e3edf9,#c2d6ef)"></div><svg style="left:1177px;top:682px" width="9" height="7" viewBox="0 0 9 7"><path d="M0.8 1 L4.5 4.8 L8.2 1" fill="none" stroke="#4a4f5a" stroke-width="2"/></svg><div class="a" style="left:1192px;top:676px;width:74px;height:20px;background:#ececec;border:1px solid #a0a0a0;border-right-color:#cfcfcf;border-bottom-color:#cfcfcf"></div><div class="a" style="left:1193px;top:677px;width:72px;height:18px;border:1px solid #fff;background:#ebe9ed"></div><div class="cell" style="left:1196px;top:678px;color:#b4b4b4">11:59 PM</div><div class="a" style="left:1248px;top:678px;width:16px;height:16px;background:linear-gradient(#eef5ff,#d6e6fb);border:1px solid #e0ebfa"></div><svg style="left:1252px;top:680px" width="9" height="12" viewBox="0 0 9 12"><path d="M1 4.5 L4.5 1.5 L8 4.5 M1 7.5 L4.5 10.5 L8 7.5" fill="none" stroke="#b5c6dc" stroke-width="1.5"/></svg>
<div class="a" style="left:1168px;top:706px;width:97px;height:24px;border:1px solid #000;box-shadow:inset 0 0 0 1px #444;background:#ebe9ed"></div>
<svg style="left:1175px;top:713px" width="15" height="12" viewBox="0 0 15 12"><path d="M1 6.5 L5 10.5 L14 1.5" fill="none" stroke="#8a8a8a" stroke-width="3"/></svg>
<div class="cell" style="left:1202px;top:709px;color:#333">Apply</div>
<div id="status" class="a">
  <div class="a" style="left:0;top:0;width:1280px;height:1px;background:#fff"></div>
  <div class="a t" style="left:3px;top:1px">The total number of employees in current company: 2.</div>
  <div class="a" style="left:856px;top:0;width:1px;height:21px;background:#fff"></div>
  <div class="a" style="left:857px;top:0;width:1px;height:21px;background:#5a82ba"></div>
  <div class="a" style="left:858px;top:0;width:422px;height:21px;background:linear-gradient(#cfe0f7 0,#bad3f3 1px,#a9c8f0 7px,#8fb1e0 7px,#86a9d8 13px,#7a9ed0 19px,#9ab6dc 20px);border-left:1px solid #e0ecfb"></div>
  <div class="a t" style="left:865px;top:1px;font-size:11px">Advanced Mode</div>
  <div class="a t" style="left:962px;top:1px;font-size:11px">Role: General Supervisor</div>
  <div class="a t" style="left:1106px;top:1px;font-size:11px;color:#a9b6ca">CAP</div>
  <div class="a t" style="left:1136px;top:1px;font-size:11px;color:#a9b6ca">NUM</div>
  <div class="a t" style="left:1171px;top:1px;font-size:11px">08/04/2014 01:58 PM</div>
</div>
</body></html>
